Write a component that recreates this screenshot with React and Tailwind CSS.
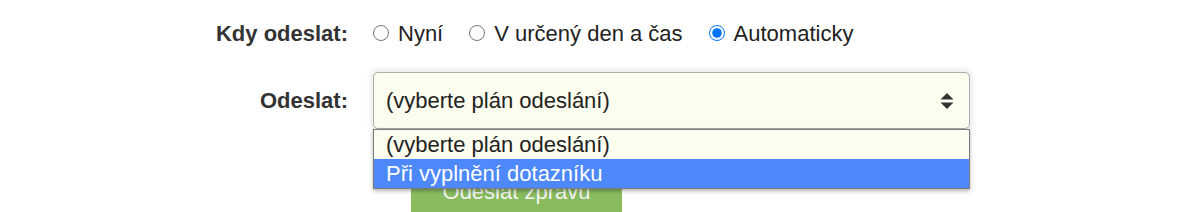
import React from 'react';

const options = ['(vyberte plán odeslání)', 'Při vyplnění dotazníku'];

const Radio = ({ label, checked }) => (
  <label className="flex items-center gap-[9px]">
    <input type="radio" name="kdy" defaultChecked={checked} className="m-0 w-[16px] h-[16px]" />
    <span>{label}</span>
  </label>
);

export default function App() {
  return (
    <div
      className="w-[1184px] h-[212px] overflow-hidden bg-white text-[22px] text-[#222]"
      style={{ fontFamily: '"Liberation Sans", Arial, sans-serif' }}
    >
      <div className="grid grid-cols-[348px_1fr] gap-x-[25px] pt-[20px]">
        {/* Kdy odeslat */}
        <div className="h-[26px] flex items-center justify-end font-bold text-[#333]">Kdy odeslat:</div>
        <div className="h-[26px] flex items-center gap-x-[26px]">
          <Radio label="Nyní" />
          <Radio label="V určený den a čas" />
          <Radio label="Automaticky" checked />
        </div>

        {/* Odeslat */}
        <div className="mt-[26px] flex items-center justify-end font-bold text-[#333]">Odeslat:</div>
        <div className="mt-[26px] relative w-[597px]">
          <div className="h-[57px] flex items-center justify-between pl-[12px] pr-[15px] rounded-[5px] border border-[#ababab] bg-[#fbfdee] shadow-[0_0_4px_3px_rgba(0,0,0,0.07)]">
            <span>(vyberte plán odeslání)</span>
            <svg width="14" height="16" viewBox="0 0 14 16" className="text-[#333]">
              <path d="M7 0 L13.5 6.5 H0.5 Z" fill="currentColor" />
              <path d="M7 16 L13.5 9.5 H0.5 Z" fill="currentColor" />
            </svg>
          </div>

          {/* open list */}
          <div className="absolute left-0 top-[57px] w-[597px] z-10 border border-[#7b7b7b] bg-[#fbfdee] shadow-[0_2px_4px_rgba(0,0,0,0.3)]">
            {options.map((o, i) => (
              <div
                key={o}
                className={`h-[29px] flex items-center pl-[12px] ${i === 1 ? 'bg-[#4d88fc] text-white' : ''}`}
              >
                {o}
              </div>
            ))}
          </div>
        </div>

        {/* submit */}
        <div />
        <div className="mt-[39px]">
          <button className="ml-[38px] w-[211px] h-[46px] bg-[#89bb5f] text-[#f4f4f4] text-[22px]">
            Odeslat zprávu
          </button>
        </div>
      </div>
    </div>
  );
}
